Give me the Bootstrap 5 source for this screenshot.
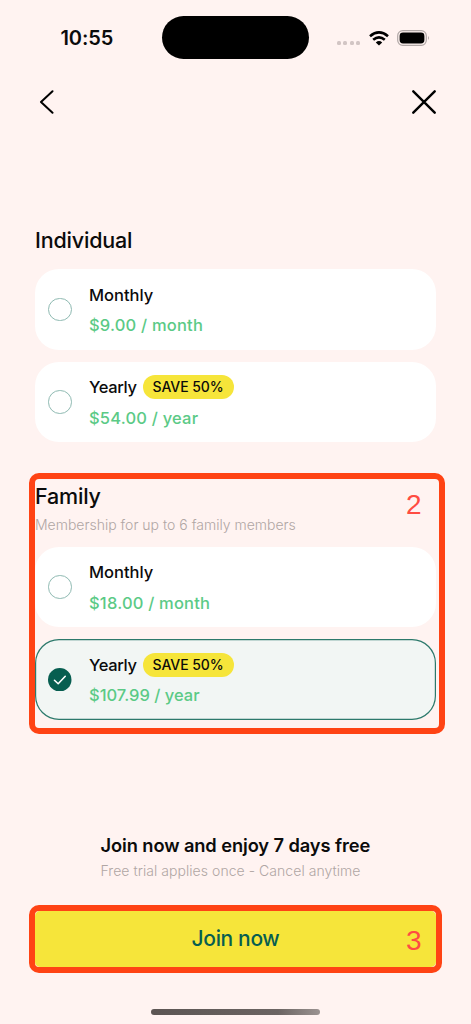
<!DOCTYPE html>
<html lang="en">
<head>
<meta charset="utf-8">
<meta name="viewport" content="width=device-width, initial-scale=1">
<title>Membership plans</title>
<link href="https://cdn.jsdelivr.net/npm/bootstrap@5.3.0/dist/css/bootstrap.min.css" rel="stylesheet">
<style>
body{background:#fff3f1;color:#0b0b0b;font-family:"Inter","Liberation Sans",sans-serif;width:471px;height:1024px;overflow:hidden}
.status-bar{height:76px;padding-left:60.5px;padding-right:41px}
.clock{font-size:20px;font-weight:600;letter-spacing:-.1px;line-height:24px;width:101.5px}
.island{width:147px;height:43px;background:#000;border-radius:22px;margin-top:-1px}
.signal{gap:2.4px;margin:10px 9px 0 0}
.signal i{width:4px;height:4px;border-radius:1.5px;background:#d2c5c4}
.top-nav{height:52px;padding:0 35px 0 39px}
.top-nav button{line-height:0}
.plans{margin:99px 35px 0}
.group-title{font-size:21.5px;font-weight:500;line-height:26px;margin:0;letter-spacing:-.18px}
.individual .stack{margin-top:16px}
.family{margin-top:41px}
.family .stack{margin-top:11.5px}
.sub{color:#b0a6a4;font-weight:300;font-size:14px;line-height:20px;white-space:nowrap}
.family .sub{margin-top:6px}
.plan{height:80.5px;border:0;border-radius:24px;background:#fff;padding:0 13px;flex-direction:row;gap:17.5px}
.plan.chosen{background:#f2f6f4;box-shadow:inset 0 0 0 1.2px #2d796b}
.stack{gap:12px}
.ring{width:23.5px;height:23.5px;border:1.1px solid #8fbab2;border-radius:50%}
.name{font-size:16.5px;font-weight:500;line-height:24px;padding-top:1px}
.yearly{letter-spacing:-.35px}
.price{font-size:16.5px;font-weight:500;line-height:24px;color:#5bca86;margin-top:6.5px;letter-spacing:.2px}
.price.tight{letter-spacing:0}
.save{font-size:14px;font-weight:500;line-height:24px;height:24px;width:91px;border-radius:12px;background:#f6e53a;color:#0b0b0b;padding:0;margin-left:6px;letter-spacing:-.05px}
.frame{border:6px solid #ff4314;border-radius:10px;pointer-events:none}
.frame-family{left:-6.5px;top:-10.5px;width:416.5px;height:261px}
.frame-join{left:-6.5px;top:-6px;width:413.5px;height:68.5px}
.num{font-family:"Liberation Sans",sans-serif;font-size:28px;line-height:32px;color:#ff4c42;right:14.5px}
.num-family{top:6px}
.num-join{top:14.5px}
.offer{margin:112.5px 0 0 100.5px}
.offer-title{font-size:18.3px;font-weight:600;line-height:26px;letter-spacing:-.1px;white-space:nowrap}
.offer .sub{margin-top:3px;letter-spacing:.05px}
.join{margin:29.5px 35px 0}
.join .btn{height:56.5px;border:0;border-radius:5px;background:#f6e53a;color:#075e50;font-size:21px;font-weight:500;letter-spacing:-.35px}
.home{width:169px;height:6px;border-radius:3px;background:linear-gradient(90deg,#5c5553,#6b6462 75%,#9b9391);margin:41.5px auto 0}
</style>
</head>
<body class="d-flex flex-column">
<header class="status-bar d-flex align-items-center">
  <div class="clock">10:55</div>
  <div class="island"></div>
  <div class="ms-auto d-flex align-items-center">
    <div class="signal d-flex"><i></i><i></i><i></i><i></i></div>
    <svg width="20" height="15" viewBox="0 0 20 15" fill="none" stroke="#000" stroke-width="2.6"><path d="M1 5.2Q10-2.5 19 5.2M4.2 8.8Q10 3.8 15.8 8.8"/><path d="M10 14.6 6.8 11.4Q10 8.7 13.2 11.4Z" fill="#000" stroke="none"/></svg>
    <svg class="ms-2" width="33" height="16" viewBox="0 0 33 16"><rect x=".7" y=".7" width="28.6" height="14.6" rx="5" fill="none" stroke="#b0a7a6" stroke-width="1.2"/><rect x="2.6" y="2.6" width="24.8" height="10.8" rx="3.4"/><path d="M31 5.7q1.8 2.3 0 4.6z" fill="#a49b9a"/></svg>
  </div>
</header>
<nav class="top-nav d-flex justify-content-between align-items-center">
  <button class="btn p-0 border-0" aria-label="Back"><svg width="16" height="24" viewBox="0 0 16 24" fill="none" stroke="#000" stroke-width="2" stroke-linecap="round" stroke-linejoin="round"><path d="M13.5 1.3 2 12 13.5 22.7"/></svg></button>
  <button class="btn p-0 border-0" aria-label="Close"><svg width="24" height="24" viewBox="0 0 24 24" stroke="#000" stroke-width="2.4" stroke-linecap="round"><path d="M1.3 1.3 22.7 22.7M22.7 1.3 1.3 22.7"/></svg></button>
</nav>
<main class="plans">
  <section class="individual">
    <h2 class="group-title">Individual</h2>
    <div class="stack d-flex flex-column">
      <div class="card plan align-items-center">
        <span class="ring"></span>
        <div><div class="name">Monthly</div><div class="price">$9.00 / month</div></div>
      </div>
      <div class="card plan align-items-center">
        <span class="ring"></span>
        <div><div class="name d-flex"><span class="yearly">Yearly</span><span class="badge save">SAVE 50%</span></div><div class="price">$54.00 / year</div></div>
      </div>
    </div>
  </section>
  <section class="family position-relative">
    <h2 class="group-title">Family</h2>
    <div class="sub">Membership for up to 6 family members</div>
    <div class="stack d-flex flex-column">
      <div class="card plan align-items-center">
        <span class="ring"></span>
        <div><div class="name">Monthly</div><div class="price">$18.00 / month</div></div>
      </div>
      <div class="card plan chosen align-items-center">
        <svg width="23.5" height="23.5" viewBox="0 0 24 24"><circle cx="12" cy="12" r="12" fill="#075e50"/><path d="m6.6 12.5 3.8 3.6 7.2-7.7" fill="none" stroke="#fff" stroke-width="1.6" stroke-linecap="round" stroke-linejoin="round"/></svg>
        <div><div class="name d-flex"><span class="yearly">Yearly</span><span class="badge save">SAVE 50%</span></div><div class="price tight">$107.99 / year</div></div>
      </div>
    </div>
    <div class="frame frame-family position-absolute"></div>
    <span class="num num-family position-absolute">2</span>
  </section>
</main>
<section class="offer">
  <div class="offer-title">Join now and enjoy 7 days free</div>
  <div class="sub">Free trial applies once - Cancel anytime</div>
</section>
<div class="join position-relative">
  <button class="btn w-100 p-0">Join now</button>
  <div class="frame frame-join position-absolute"></div>
  <span class="num num-join position-absolute">3</span>
</div>
<div class="home"></div>
<script src="https://cdn.jsdelivr.net/npm/bootstrap@5.3.0/dist/js/bootstrap.bundle.min.js"></script>
</body>
</html>
